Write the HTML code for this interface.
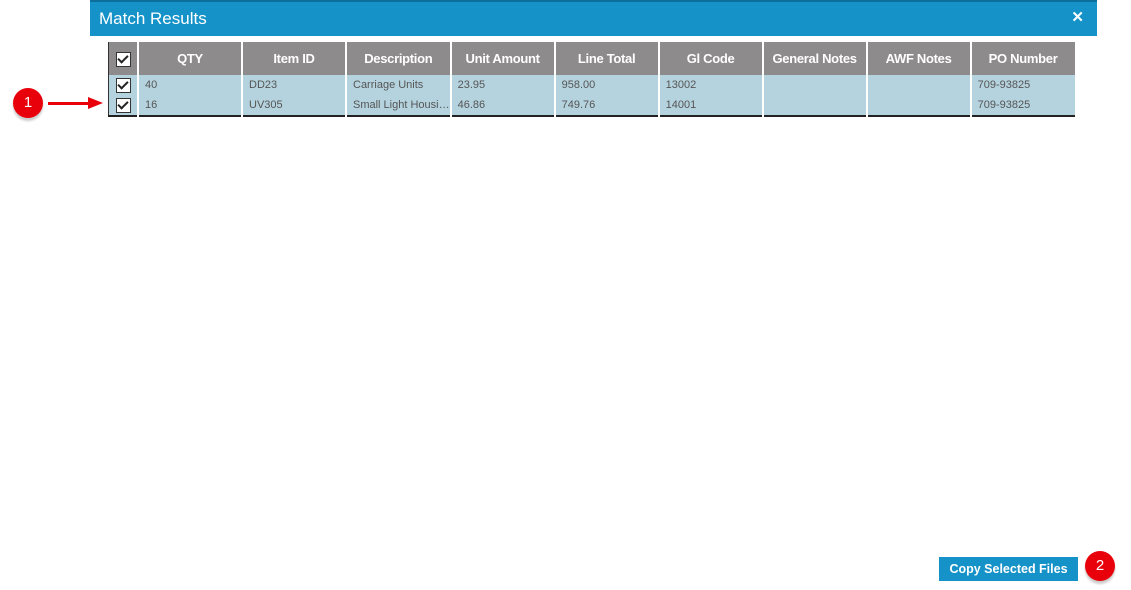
<!DOCTYPE html>
<html><head><style>
body{margin:0;width:1131px;height:590px;background:#fff;position:relative;font-family:"Liberation Sans",sans-serif;overflow:hidden}
.hdr{position:absolute;left:90px;top:0;width:1007px;height:36px;background:#1592c8;border-top:2px solid #0d6e9a;box-sizing:border-box}
.hdr span{position:absolute;left:9px;top:7px;color:#fff;font-size:17px}
.hdr b{position:absolute;right:13px;top:6px;color:#fff;font-size:15px}
table{position:absolute;left:108px;top:42px;border-collapse:collapse;border-left:1px solid #333;border-bottom:2px solid #222}
th{background:#8e8b8c;color:#fff;font-size:13px;height:33px;padding:0;border-right:2px solid #fff;font-weight:bold;letter-spacing:-0.3px}
td{background:#b5d3de;height:20px;padding:0 0 0 6px;font-size:11px;color:#555;border-right:2px solid #fff;white-space:nowrap}
th:last-child,td:last-child{border-right:none}
.cb{display:inline-block;width:13px;height:13px;border:1.5px solid #333;background:#fff;position:relative;vertical-align:middle}
.cb:after{content:"";position:absolute;left:3px;top:0px;width:4px;height:8px;border:solid #222;border-width:0 2.5px 2.5px 0;transform:rotate(45deg)}
.badge{position:absolute;width:30px;height:30px;border-radius:50%;background:#e8000b;color:#fff;font-size:15px;text-align:center;line-height:30px;box-shadow:0 3px 2px #ccc}
.btn{position:absolute;left:939px;top:557px;width:139px;height:24px;background:#1592c8;color:#fff;font-size:12.5px;font-weight:bold;text-align:center;line-height:24px}
</style></head><body>
<div class="hdr"><span>Match Results</span><b>✕</b></div>
<table>
<tr><th style="width:28px;text-align:center"><span class="cb"></span></th><th style="width:102px">QTY</th><th style="width:102px">Item ID</th><th style="width:102px">Description</th><th style="width:102px">Unit Amount</th><th style="width:102px">Line Total</th><th style="width:102px">Gl Code</th><th style="width:102px">General Notes</th><th style="width:102px">AWF Notes</th><th style="width:103px">PO Number</th></tr>
<tr><td style="padding:0;text-align:center"><span class="cb"></span></td><td>40</td><td>DD23</td><td>Carriage Units</td><td>23.95</td><td>958.00</td><td>13002</td><td></td><td></td><td>709-93825</td></tr>
<tr><td style="padding:0;text-align:center"><span class="cb"></span></td><td>16</td><td>UV305</td><td>Small Light Housi…</td><td>46.86</td><td>749.76</td><td>14001</td><td></td><td></td><td>709-93825</td></tr>
</table>
<div class="badge" style="left:13px;top:88px">1</div>
<div style="position:absolute;left:48px;top:102px;width:42px;height:3px;background:#e8000b"></div>
<div style="position:absolute;left:88px;top:97px;width:0;height:0;border-left:15px solid #e8000b;border-top:6px solid transparent;border-bottom:6px solid transparent"></div>
<div class="btn">Copy Selected Files</div>
<div class="badge" style="left:1085px;top:551px">2</div>
</body></html>
